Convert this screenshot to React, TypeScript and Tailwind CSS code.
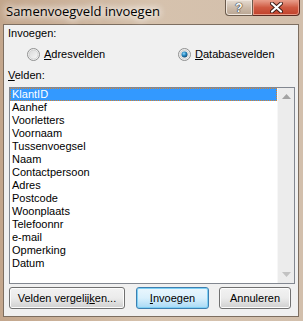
import React from "react";

const items = [
  "KlantID",
  "Aanhef",
  "Voorletters",
  "Voornaam",
  "Tussenvoegsel",
  "Naam",
  "Contactpersoon",
  "Adres",
  "Postcode",
  "Woonplaats",
  "Telefoonnr",
  "e-mail",
  "Opmerking",
  "Datum",
];

function Radio({ checked }: { checked: boolean }) {
  return (
    <svg width="13" height="13" viewBox="0 0 13 13" className="shrink-0">
      <defs>
        <linearGradient id={checked ? "rgc" : "rgu"} x1="0" y1="0" x2="1" y2="1">
          <stop offset="0" stopColor="#d8d8d8" />
          <stop offset="1" stopColor="#f8f8f8" />
        </linearGradient>
        <radialGradient id="dot" cx="0.4" cy="0.35" r="0.7">
          <stop offset="0" stopColor="#9fd8f7" />
          <stop offset="0.45" stopColor="#2a8fc8" />
          <stop offset="1" stopColor="#0e3f68" />
        </radialGradient>
      </defs>
      <circle cx="6.5" cy="6.5" r="6" fill="#f4f4f4" stroke="#8e8f8f" strokeWidth="1" />
      <circle cx="6.5" cy="6.5" r="4.5" fill={checked ? "url(#rgc)" : "url(#rgu)"} stroke="#c4c4c4" strokeWidth="0.6" />
      {checked && <circle cx="6.5" cy="6.5" r="3" fill="url(#dot)" />}
    </svg>
  );
}

function Btn({
  children,
  w,
  def,
}: {
  children: React.ReactNode;
  w: string;
  def?: boolean;
}) {
  return (
    <div
      className={
        "h-[22px] rounded-[3px] border flex items-center justify-center text-[11px] text-black " +
        w +
        (def
          ? " border-[#3c7fb1] bg-gradient-to-b from-[#eaf6fd] via-[#d9f0fc] to-[#a7d9f5] shadow-[inset_0_0_0_1px_#7fd0f4]"
          : " border-[#707070] bg-gradient-to-b from-[#f2f2f2] via-[#ebebeb] to-[#cfcfcf] shadow-[inset_0_0_0_1px_#fcfcfc]")
      }
    >
      {children}
    </div>
  );
}

export default function App() {
  return (
    <div
      className="w-[303px] h-[321px] relative overflow-hidden bg-gradient-to-r from-[#c3a68c] via-[#d6c2ad] to-[#d2bfac] flex flex-col"
      style={{ fontFamily: '"Liberation Sans", Arial, sans-serif' }}
    >
      {/* Title bar */}
      <div className="h-[24px] flex items-start shrink-0 relative">
        <div
          className="pl-[6px] pt-[3px] text-[13px] leading-[16px] text-black"
          style={{
            fontFamily: '"Open Sans", "Liberation Sans", sans-serif',
            textShadow: "0 0 6px #fff, 0 0 8px #fff, 0 0 10px #f4ece4",
          }}
        >
          Samenvoegveld invoegen
        </div>
        <div className="absolute left-[225px] top-0 flex h-[16px]">
          <div className="w-[28px] h-[16px] rounded-bl-[4px] border border-t-0 border-[#6a5a4c] bg-gradient-to-b from-[#e6dcd2] via-[#cdbcab] to-[#b9a592] flex items-center justify-center shadow-[inset_0_0_0_1px_#efe6dd]">
            <span
              className="text-[12px] font-bold leading-none text-white"
              style={{ textShadow: "0 0 1px #333, 0 0 1px #333, 0 0 1px #333" }}
            >
              ?
            </span>
          </div>
          <div className="w-[47px] h-[16px] rounded-br-[4px] border border-t-0 border-l-0 border-[#5a2a20] bg-gradient-to-b from-[#e8a08e] via-[#cf5a42] to-[#c0402a] flex items-center justify-center shadow-[inset_0_0_0_1px_#e89a86]">
            <svg width="13" height="11" viewBox="0 0 13 11">
              <path d="M2 1.5 L11 9.5 M11 1.5 L2 9.5" stroke="#3a1a14" strokeWidth="4" strokeLinecap="round" />
              <path d="M2 1.5 L11 9.5 M11 1.5 L2 9.5" stroke="#ffffff" strokeWidth="2.2" strokeLinecap="round" />
            </svg>
          </div>
        </div>
      </div>

      {/* Client */}
      <div className="ml-[3px] mr-[4px] h-[293px] border border-[#7d6e60] bg-[#f0f0f0] flex flex-col text-[11px] text-black leading-[13px] shrink-0">
        <div className="mt-[2px] pl-[4px] h-[13px]">Invoegen:</div>
        <div className="mt-[8px] h-[13px] flex items-center">
          <div className="ml-[23px] flex items-center gap-[4px] w-[151px]">
            <Radio checked={false} />
            <span>
              <span className="underline">A</span>dresvelden
            </span>
          </div>
          <div className="flex items-center gap-[4px]">
            <Radio checked={true} />
            <span>
              <span className="underline">D</span>atabasevelden
            </span>
          </div>
        </div>
        <div className="mt-[8px] pl-[4px] h-[13px]">
          <span className="underline">V</span>elden:
        </div>
        <div className="mt-[5px] ml-[5px] w-[286px] h-[197px] border border-[#828790] bg-white flex">
          <div className="flex-1 flex flex-col">
            {items.map((it, i) => (
              <div
                key={it}
                className={
                  "h-[13px] pl-[2px] leading-[13px] " +
                  (i === 0
                    ? "bg-[#3399ff] text-white outline-1 outline-dotted outline-offset-[-1px] outline-[#d9822b]"
                    : "")
                }
              >
                {it}
              </div>
            ))}
          </div>
          <div className="w-[17px] bg-[#ececec] border-l border-[#f7f7f7] flex flex-col justify-between items-center py-[6px]">
            <svg width="9" height="5" viewBox="0 0 9 5">
              <path d="M0 5 L4.5 0 L9 5 Z" fill="#a3a3a3" />
            </svg>
            <svg width="9" height="5" viewBox="0 0 9 5">
              <path d="M0 0 L4.5 5 L9 0 Z" fill="#c2c2c2" />
            </svg>
          </div>
        </div>
        <div className="mt-[3px] ml-[5px] flex">
          <Btn w="w-[116px]">
            Velden vergelij<span className="underline">k</span>en...
          </Btn>
          <div className="ml-[11px]">
            <Btn w="w-[73px]" def>
              <span className="underline">I</span>nvoegen
            </Btn>
          </div>
          <div className="ml-[10px]">
            <Btn w="w-[72px]">Annuleren</Btn>
          </div>
        </div>
      </div>
    </div>
  );
}
